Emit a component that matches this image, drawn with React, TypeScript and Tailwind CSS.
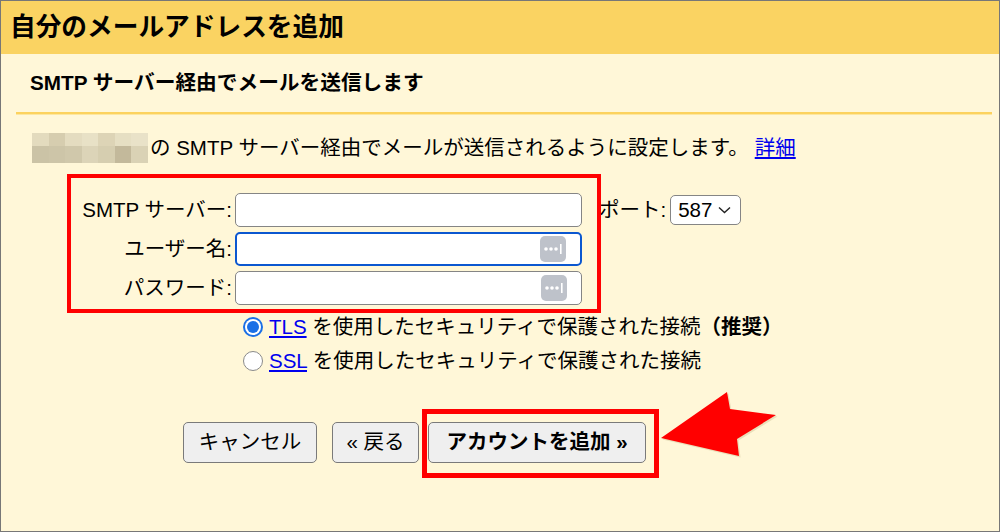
import React from "react";

const mosaic = [
  ["#e3dbbe", "#d6cdaf", "#e4dcc0", "#e8e1c6", "#ddd4b6", "#e6dfc3", "#e9e2c8"],
  ["#cbc3a6", "#cdc5a8", "#d0c8ab", "#dcd4b8", "#d6ceb0", "#c3b99b", "#dad2b5"],
];

function KeyBadge() {
  return (
    <div className="absolute right-[14px] top-1/2 -translate-y-1/2 w-[26px] h-[26px] rounded-[5px] bg-[#bec2ca] flex items-center justify-center">
      <svg width="20" height="12" viewBox="0 0 20 12">
        <circle cx="3" cy="6" r="1.8" fill="#fff" />
        <circle cx="8" cy="6" r="1.8" fill="#fff" />
        <circle cx="13" cy="6" r="1.8" fill="#fff" />
        <rect x="17" y="1" width="1.6" height="10" fill="#fff" />
      </svg>
    </div>
  );
}

function Field({ label, focused, secret }: { label: string; focused?: boolean; secret?: boolean }) {
  return (
    <div className="flex items-center h-[34px]">
      <span className="w-[231px] text-right">{label}</span>
      <div
        className={
          focused
            ? "relative ml-[3px] w-[347px] h-[34px] rounded-[5px] border-2 border-[#0b57d0] bg-white"
            : "relative ml-[3px] w-[347px] h-[34px] rounded-[5px] border border-[#858585] bg-white"
        }
      >
        {secret && <KeyBadge />}
      </div>
    </div>
  );
}

function Radio({ checked }: { checked?: boolean }) {
  return checked ? (
    <span className="w-[20px] h-[20px] rounded-full bg-[#1a6fe6] flex items-center justify-center">
      <span className="w-[16px] h-[16px] rounded-full bg-white flex items-center justify-center">
        <span className="w-[12px] h-[12px] rounded-full bg-[#1a6fe6]" />
      </span>
    </span>
  ) : (
    <span className="w-[20px] h-[20px] rounded-full bg-white border border-[#8a8a8a]" />
  );
}

export default function App() {
  return (
    <div className="relative w-[1000px] h-[532px] overflow-hidden border border-[#777] bg-[#fff7d8] text-black text-[20.5px] font-['Liberation_Sans','Noto_Sans_CJK_JP',sans-serif]">
      <div className="h-[53px] bg-[#fad362] flex items-center pl-[9px]">
        <h1 className="text-[25.7px] font-bold">自分のメールアドレスを追加</h1>
      </div>

      <div className="h-[58px] flex items-center pl-[29px]">
        <h2 className="text-[20.7px] font-bold">SMTP サーバー経由でメールを送信します</h2>
      </div>
      <div className="ml-[15px] mr-[7px] h-[3px] bg-[#fcd25e] border-b border-[#fde79f]" />

      <div className="mt-[18px] flex items-center h-[30px] pl-[31px]">
        <div className="flex flex-col w-[116px] h-[30px]">
          {mosaic.map((row, r) => (
            <div key={r} className={r === 0 ? "flex h-[13px]" : "flex h-[17px]"}>
              {row.map((c, i) => (
                <span key={i} className="flex-1" style={{ background: c }} />
              ))}
            </div>
          ))}
        </div>
        <span className="ml-[2px]">
          の SMTP サーバー経由でメールが送信されるように設定します。
          <a className="text-[#0000ee] underline ml-[6px]">詳細</a>
        </span>
      </div>

      <div className="mt-[30px] flex flex-col gap-[5px]">
        <div className="flex items-center h-[34px]">
          <span className="w-[231px] text-right">SMTP サーバー:</span>
          <div className="ml-[3px] w-[347px] h-[34px] rounded-[5px] border border-[#858585] bg-white" />
          <span className="ml-[17px]">ポート:</span>
          <div className="ml-[4px] w-[71px] h-[30px] rounded-[5px] border border-[#858585] bg-white flex items-center pl-[7px] gap-[6px]">
            <span>587</span>
            <svg width="13" height="8" viewBox="0 0 13 8">
              <path d="M1 1.5 L6.5 6.5 L12 1.5" fill="none" stroke="#222" strokeWidth="1.4" />
            </svg>
          </div>
        </div>
        <Field label="ユーザー名:" focused secret />
        <Field label="パスワード:" secret />
      </div>

      <div className="mt-[7px] ml-[242px] flex flex-col">
        <div className="flex items-center h-[30px] gap-[6px]">
          <Radio checked />
          <span>
            <a className="text-[#0000ee] underline">TLS</a> を使用したセキュリティで保護された接続
            <b>（推奨）</b>
          </span>
        </div>
        <div className="flex items-center h-[30px] mt-[4px] gap-[6px]">
          <Radio />
          <span>
            <a className="text-[#0000ee] underline">SSL</a> を使用したセキュリティで保護された接続
          </span>
        </div>
      </div>

      <div className="mt-[46px] ml-[182px] flex items-center">
        <button className="w-[134px] h-[41px] rounded-[5px] border border-[#7a7a7a] bg-[#efefef]">キャンセル</button>
        <button className="ml-[15px] w-[87px] h-[41px] rounded-[5px] border border-[#7a7a7a] bg-[#efefef]">« 戻る</button>
        <button className="ml-[9px] w-[218px] h-[41px] rounded-[5px] border border-[#7a7a7a] bg-[#efefef] font-bold">
          アカウントを追加 »
        </button>
      </div>

      {/* annotations */}
      <div className="absolute left-[66px] top-[173px] w-[534px] h-[139px] border-4 border-[#ff0000]" />
      <div className="absolute left-[421px] top-[408px] w-[237px] h-[69px] border-[5px] border-[#ff0000]" />
      <svg className="absolute left-[655px] top-[385px]" width="125" height="75" viewBox="0 0 125 75">
        <polygon points="5,52 71,6 74,23 120,29 81,53 83,70" fill="#c9bf8f" opacity="0.4" transform="translate(1.5,1.5)" />
        <polygon points="5,52 71,6 74,23 120,29 81,53 83,70" fill="#ff0000" />
      </svg>
    </div>
  );
}
